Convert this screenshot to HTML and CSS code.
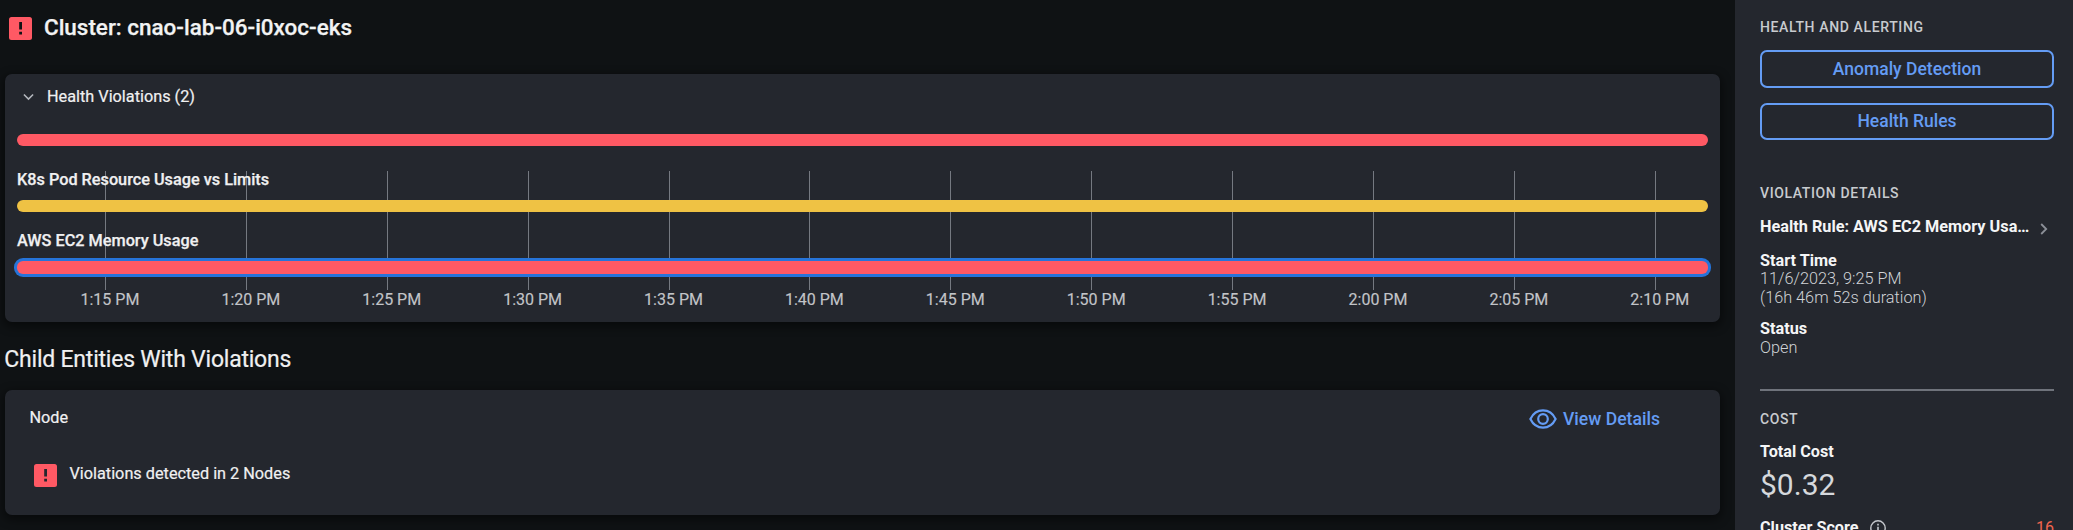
FILE: index.html
```html
<!DOCTYPE html>
<html lang="en">
<head>
<meta charset="utf-8">
<title>Cluster: cnao-lab-06-i0xoc-eks</title>
<link rel="stylesheet" href="styles.css">
</head>
<body>
<div class="app">
  <main class="main">
    <header class="page-head">
      <svg class="alert-icon" viewBox="0 0 23 23"><rect width="23" height="23" rx="2.5" fill="#ff5964"/><path d="M10.200 5h2.800v7.500h-2.800zM10.200 14.700h2.800v2.800h-2.800z" fill="currentColor"/></svg>
      <h1 class="title">Cluster: cnao-lab-06-i0xoc-eks</h1>
    </header>

    <section class="card violations">
      <div class="card-toggle">
        <svg class="chevron-down" viewBox="0 0 12 8"><path d="M1 1.3l5 5 5-5" fill="none" stroke="#b4b7bd" stroke-width="1.7"/></svg>
        <span>Health Violations (2)</span>
      </div>
      <div class="bar critical summary-bar"></div>
      <div class="chart">
        <div class="gridlines"><i></i><i></i><i></i><i></i><i></i><i></i><i></i><i></i><i></i><i></i><i></i><i></i></div>
        <div class="rule-name">K8s Pod Resource Usage vs Limits</div>
        <div class="bar warning"></div>
        <div class="rule-name second">AWS EC2 Memory Usage</div>
        <div class="bar critical selected"></div>
      </div>
      <div class="axis">
        <span>1:15 PM</span><span>1:20 PM</span><span>1:25 PM</span><span>1:30 PM</span><span>1:35 PM</span><span>1:40 PM</span><span>1:45 PM</span><span>1:50 PM</span><span>1:55 PM</span><span>2:00 PM</span><span>2:05 PM</span><span>2:10 PM</span>
      </div>
    </section>

    <h2 class="subtitle">Child Entities With Violations</h2>

    <section class="card children">
      <div class="child-head">
        <span>Node</span>
        <a class="view-details">
          <svg class="eye" viewBox="0 0 28 20"><path d="M1.4 10C4 4.6 8.600 1.400 14 1.400S24 4.600 26.600 10C24 15.400 19.400 18.600 14 18.600S4 15.400 1.400 10z" fill="none" stroke="currentColor" stroke-width="2.200"/><circle cx="14" cy="10" r="4.800" fill="none" stroke="currentColor" stroke-width="2.200"/></svg>
          <span>View Details</span>
        </a>
      </div>
      <div class="child-row">
        <svg class="alert-icon" viewBox="0 0 23 23"><rect width="23" height="23" rx="2.5" fill="#ff5964"/><path d="M10.200 5h2.800v7.500h-2.800zM10.200 14.700h2.800v2.800h-2.800z" fill="currentColor"/></svg>
        <span>Violations detected in 2 Nodes</span>
      </div>
    </section>
  </main>

  <aside class="side">
    <h3 class="side-title">HEALTH AND ALERTING</h3>
    <button class="btn">Anomaly Detection</button>
    <button class="btn btn-rules">Health Rules</button>
    <h3 class="side-title details-title">VIOLATION DETAILS</h3>
    <div class="rule-link">
      <span class="rule-text">Health Rule: AWS EC2 Memory Usa…</span>
      <svg class="chevron-right" viewBox="0 0 8 12"><path d="M1.200 1l5 5-5 5" fill="none" stroke="#8b8f97" stroke-width="1.800"/></svg>
    </div>
    <dl class="facts">
      <dt>Start Time</dt>
      <dd>11/6/2023, 9:25 PM<br>(16h 46m 52s duration)</dd>
      <dt>Status</dt>
      <dd class="status">Open</dd>
    </dl>
    <hr class="divider">
    <h3 class="side-title cost-title">COST</h3>
    <div class="cost-label">Total Cost</div>
    <div class="cost-value">$0.32</div>
    <div class="score">
      <span class="score-label">Cluster Score</span>
      <svg class="info" viewBox="0 0 16 16"><circle cx="8" cy="8" r="7.200" fill="none" stroke="#c4c7cc" stroke-width="1.400"/><path d="M7.200 3.800h1.600v1.600H7.200zM7.200 6.800h1.600v5H7.200z" fill="#c4c7cc"/></svg>
      <span class="score-value">16</span>
    </div>
  </aside>
</div>
</body>
</html>
```
FILE: styles.css
```css
* { box-sizing: border-box; }
body {
  margin: 0;
  height: 530px;
  overflow: hidden;
  background: #0f1214;
  color: #f0f0f1;
  font: 400 16px/20px Roboto, "Liberation Sans", sans-serif;
}
h1, h2, h3, dl, dd { margin: 0; }
.app { display: flex; height: 530px; overflow: hidden; }
.main { flex: 1; min-width: 0; padding: 0 15px 0 5px; }

.page-head { display: flex; height: 74px; padding: 14px 0 0 3.500px; color: #0f1214; }
.alert-icon { width: 23px; height: 23px; flex: none; }
.page-head .alert-icon { margin-top: 3.400px; }
.title { margin-left: 12.500px; color: #f2f3f3; font-size: 22.450px; line-height: 27px; font-weight: 500; -webkit-text-stroke: .25px #f2f3f3; }

.card { border-radius: 7px; background: #24272e; box-shadow: 0 3px 10px 2px rgba(0, 0, 0, .45); }
.violations { height: 248px; padding: 0 12px; }
.card-toggle { display: flex; align-items: center; height: 46px; padding-left: 6px; gap: 13px; font-size: 16.250px; -webkit-text-stroke: .2px #f0f0f1; }
.chevron-down { width: 11px; height: 8px; }
.bar { height: 12px; border-radius: 6px; }
.critical { background: #ff5964; }
.warning { background: #efc244; }
.summary-bar { margin-top: 14px; }
.chart { position: relative; height: 119px; margin-top: 25px; }
.gridlines {
  position: absolute;
  inset: 0 0 0 88px;
  display: grid;
  grid-template-columns: repeat(11, 140.900px) 1px;
}
.gridlines i { border-left: 1px solid #757981; }
.rule-name { position: relative; height: 29px; font-size: 16.250px; line-height: 18px; font-weight: 500; -webkit-text-stroke: .25px #f0f0f1; }
.rule-name.second { padding-top: 20px; height: 49px; }
.chart .bar { position: relative; }
.chart .selected { height: 13px; box-shadow: 0 0 0 3px #2674d9; }
.axis {
  display: grid;
  grid-template-columns: repeat(11, 140.900px) 60px;
  margin-left: 63.500px;
  color: #c2c4c8;
  -webkit-text-stroke: .15px #c2c4c8;
}

.subtitle { height: 68px; padding-top: 24px; margin-left: -.7px; font-size: 23px; line-height: 27px; font-weight: 400; letter-spacing: -.22px; -webkit-text-stroke: .2px #f0f0f1; }
.children { height: 125px; padding: 0 60px 0 24.500px; font-size: 16.250px; -webkit-text-stroke: .2px #f0f0f1; }
.child-head { display: flex; justify-content: space-between; padding-top: 18px; }
.view-details { display: flex; align-items: center; gap: 6px; margin-top: 1px; color: #649cf4; font-size: 17.600px; font-weight: 500; -webkit-text-stroke: 0; }
.eye { width: 28px; height: 20px; }
.child-row { display: flex; gap: 13px; padding: 35px 0 0 4px; }
.child-row .alert-icon { margin-top: -.5px; color: #24272e; }

.side { flex: none; width: 338px; padding: 17px 19px 0 25px; background: #24272e; }
.side-title { height: 33px; color: #c8cbcf; font-size: 14px; font-weight: 500; letter-spacing: .62px; }
.btn {
  display: block;
  width: 100%;
  height: 38px;
  padding: 0;
  border: 2px solid #649cf4;
  border-radius: 7px;
  background: none;
  color: #649cf4;
  font: 500 17.500px/34px Roboto, sans-serif;
}
.btn-rules { height: 37px; margin-top: 15px; padding-bottom: 1px; line-height: 32px; }
.details-title { height: 34px; margin-top: 43px; }
.rule-link { display: flex; align-items: center; height: 20px; }
.rule-text { width: 280px; white-space: nowrap; color: #f4f5f6; font-size: 16.250px; font-weight: 700; }
.chevron-right { width: 8px; height: 12px; margin-top: 3px; }
.facts { height: 152px; padding-top: 14px; font-size: 16.250px; line-height: 19px; }
.facts dt { height: 18px; color: #f4f5f6; font-weight: 700; }
.facts dd { margin-bottom: 12px; color: #d0d3d7; font-weight: 300; }
.facts .status { padding-top: 1px; }
.divider { height: 2px; margin: 0; border: 0; background: #6f737b; }
.cost-title { margin-top: 18px; }
.cost-label { height: 20px; color: #f4f5f6; font-size: 16.200px; font-weight: 700; }
.cost-value { height: 56px; padding-top: 5px; color: #d5d8dc; font-size: 30px; line-height: 36px; }
.score { display: flex; align-items: center; }
.score-label { color: #f4f5f6; font-size: 16.200px; font-weight: 700; }
.info { width: 16px; height: 16px; margin-left: 12px; }
.score-value { margin-left: auto; color: #f0654f; }
```
